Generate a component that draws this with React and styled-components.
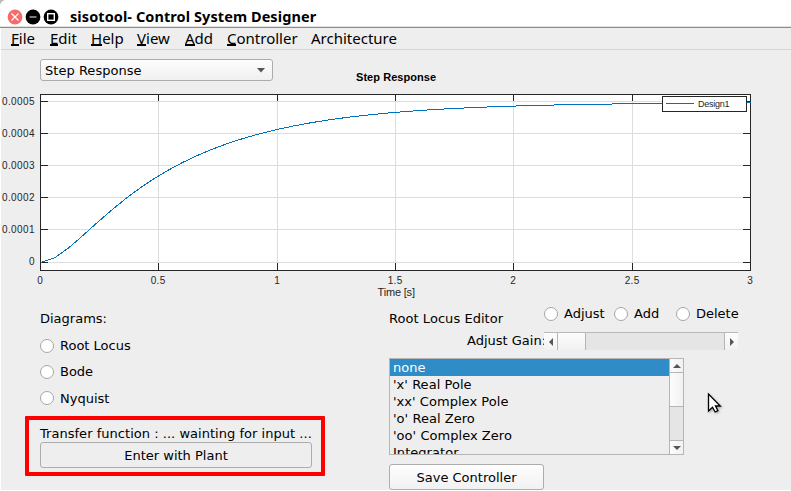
import React from "react";
import styled, { createGlobalStyle } from "styled-components";

const GlobalStyle = createGlobalStyle`
  * { box-sizing: border-box; }
  body { margin: 0; background: #fff; }
`;

const Window = styled.div`
  position: relative;
  width: 791px;
  height: 491px;
  overflow: hidden;
  display: flex;
  flex-direction: column;
  background: #fff;
  color: #000;
  font: 13px/17px "DejaVu Sans", sans-serif;
  white-space: nowrap;
`;

const CornerShade = styled.svg`
  position: absolute;
  left: 0;
  top: 0;
`;

const TitleBar = styled.header`
  height: 28px;
  flex: none;
  display: flex;
  align-items: center;
  padding: 6px 0 0 7px;
  border-bottom: 1px solid #8b8b8b;
  box-shadow: inset 0 -1px #e2e2e2;
`;

const Title = styled.h1`
  margin: -2px 0 0 11px;
  font: 700 14.5px/20px "Noto Sans", sans-serif;
  letter-spacing: 0.08px;
`;

const MenuBar = styled.nav`
  height: 22px;
  flex: none;
  display: flex;
  margin-left: 1px;
  padding-left: 10px;
  background: #eee;
  border-bottom: 1px solid #d4d4d4;
`;

const MenuItem = styled.div`
  width: ${(p) => p.$width}px;
  font: 15px/21px "Noto Sans", sans-serif;
`;

const Mnemonic = styled.span`
  display: inline-block;
  height: 18px;
  line-height: 21px;
  vertical-align: top;
  border-bottom: 2px solid #000;
`;

const Content = styled.main`
  height: 440px;
  flex: none;
  margin-left: 1px;
  padding-left: 39px;
  background: #eee;
`;

const PlotHeader = styled.div`
  height: 44px;
  display: flex;
  align-items: flex-start;
  padding-top: 9px;
`;

const Select = styled.div`
  width: 233px;
  height: 22px;
  display: flex;
  align-items: center;
  justify-content: space-between;
  padding: 1px 7px 0 4px;
  border: 1px solid #acacac;
  border-radius: 3px;
  background: linear-gradient(#fdfdfd, #f0f0f0);
  letter-spacing: 0.03px;
`;

const PlotTitle = styled.h2`
  margin: 10px 0 0 83px;
  font: 700 11px/16px "Liberation Sans", sans-serif;
  letter-spacing: 0.05px;
`;

const Plot = styled.svg`
  display: block;
  margin-left: -40px;
  overflow: visible;
  font: 10px "Liberation Sans", sans-serif;
  fill: #262626;
`;

const Panels = styled.div`
  display: grid;
  grid-template-columns: 349px 360px;
`;

const LeftPanel = styled.section`
  padding-top: 10px;
`;

const RadioRow = styled.label`
  height: ${(p) => p.$height || 17}px;
  width: ${(p) => (p.$width ? `${p.$width}px` : "auto")};
  flex: none;
  display: flex;
  align-items: center;
  gap: 6px;
`;

const RadioDot = styled.span`
  width: 14px;
  height: 14px;
  flex: none;
  border: 1px solid #a6a6a6;
  border-radius: 50%;
  background: #fff;
`;

const RadioStack = styled.div`
  padding-top: 5px;
`;

const Highlight = styled.div`
  width: 300px;
  height: 60px;
  margin: 4px 0 0 -15px;
  padding: 5px 0 0 11px;
  border: 4px solid #f00;
  border-radius: 1px;
`;

const Status = styled.div`
  letter-spacing: 0.03px;
`;

const Button = styled.button`
  display: block;
  width: ${(p) => p.$width}px;
  height: 26px;
  padding: 0;
  margin: 0;
  border: 1px solid #adadad;
  border-radius: 3px;
  background: ${(p) => (p.$flat ? "#eee" : "linear-gradient(#fdfdfd, #f1f1f1)")};
  color: #000;
  font: inherit;
`;

const RightPanel = styled.section`
  padding-top: 5px;
`;

const EditorRow = styled.div`
  display: flex;
  height: 27px;
`;

const EditorTitle = styled.div`
  width: 155px;
  flex: none;
  padding-top: 5px;
  letter-spacing: 0.05px;
`;

const GainRow = styled.div`
  display: flex;
  height: 26px;
`;

const GainLabel = styled.div`
  width: 77px;
  margin-left: 78px;
`;

const Slider = styled.div`
  width: 194px;
  height: 18px;
  display: flex;
  background: #e5e5e5;
  border-top: 1px solid #b9b9b9;
`;

const SliderArrow = styled.div`
  width: 14px;
  display: grid;
  place-items: center;
  background: linear-gradient(#fdfdfd, #f1f1f1);
  border-right: 1px solid #b5b5b5;
`;

const SliderEndArrow = styled(SliderArrow)`
  margin-left: auto;
  border-right: 0;
  border-left: 1px solid #b5b5b5;
`;

const SliderThumb = styled.div`
  width: 28px;
  background: linear-gradient(#fdfdfd, #f1f1f1);
  border-right: 1px solid #b5b5b5;
`;

const ListBox = styled.div`
  width: 295px;
  height: 97px;
  display: flex;
  border: 1px solid #b5b5b5;
  margin-bottom: 9px;
`;

const Options = styled.ul`
  flex: 1;
  margin: 0;
  padding: 0;
  list-style: none;
  overflow: hidden;
  letter-spacing: 0.04px;
`;

const Option = styled.li`
  height: 17px;
  padding-left: 3px;
  background: ${(p) => (p.$selected ? "#308cc6" : "transparent")};
  color: ${(p) => (p.$selected ? "#fff" : "#000")};
`;

const ScrollBar = styled.div`
  width: 14px;
  display: flex;
  flex-direction: column;
  border-left: 1px solid #b5b5b5;
  background: #e5e5e5;
`;

const ScrollArrow = styled.div`
  height: 14px;
  display: grid;
  place-items: center;
  background: linear-gradient(90deg, #fdfdfd, #f1f1f1);
  border-${(p) => p.$edge}: 1px solid #b5b5b5;
`;

const ScrollThumb = styled.div`
  height: 34px;
  margin-bottom: auto;
  background: linear-gradient(90deg, #fdfdfd, #f1f1f1);
  border-bottom: 1px solid #b5b5b5;
`;

const Cursor = styled.svg`
  position: absolute;
  left: 706px;
  top: 392px;
  filter: drop-shadow(1px 1px 1px rgba(0, 0, 0, 0.3));
`;

const MENUS = [
  ["File", 39], ["Edit", 41], ["Help", 46], ["View", 48],
  ["Add", 42], ["Controller", 84], ["Architecture", 90],
];

const OPTIONS = [
  "none", "'x' Real Pole", "'xx' Complex Pole", "'o' Real Zero",
  "'oo' Complex Zero", "Integrator",
];

const X_TICKS = [
  [0, 40], [0.5, 158], [1, 277], [1.5, 395], [2, 513], [2.5, 632], [3, 750],
];
const Y_TICKS = [
  ["0.0005", 101], ["0.0004", 133], ["0.0003", 165],
  ["0.0002", 197], ["0.0001", 229], ["0", 262],
];

/* Unit step response of a plant with poles at -2 and -10. */
const curve = Array.from({ length: 51 }, (_, i) => {
  const t = i * 0.06;
  const y = 1 - 1.25 * Math.exp(-2 * t) + 0.25 * Math.exp(-10 * t);
  return `${(40.5 + t * 236.67).toFixed(2)},${(262.4 - y * 160).toFixed(2)}`;
}).join(" ");

function StepPlot() {
  return (
    <Plot width="791" height="206" viewBox="0 94 791 206">
      <rect x="40" y="94" width="711" height="177" fill="#fff" />
      <g shapeRendering="crispEdges" fill="none">
        <g stroke="#dedede">
          {X_TICKS.map(([t, x]) => <path key={t} d={`M${x + 0.5} 94V270`} />)}
          {Y_TICKS.map(([l, y]) => <path key={l} d={`M40 ${y + 0.5}H750`} />)}
        </g>
        <g stroke="#262626">
          {X_TICKS.map(([t, x]) => <path key={t} d={`M${x + 0.5} 94v7M${x + 0.5} 263v7`} />)}
          {Y_TICKS.map(([l, y]) => <path key={l} d={`M40 ${y + 0.5}h8M743 ${y + 0.5}h8`} />)}
          <rect x="40.5" y="94.5" width="710" height="176" />
        </g>
        <polyline points={curve} stroke="#0072bd" />
        <rect x="662.5" y="96.5" width="84" height="15" fill="#fff" stroke="#262626" />
        <path d="M666 103.5h28" stroke="#0072bd" />
      </g>
      <text x="698" y="107" fontSize="9" textLength="31.5">Design1</text>
      {Y_TICKS.map(([l, y]) => (
        <text
          key={l}
          x="34.5"
          y={y + (l === "0" ? 3 : 4)}
          textAnchor="end"
          textLength={l === "0" ? 5.5 : 32.5}
        >
          {l}
        </text>
      ))}
      {X_TICKS.map(([t, x]) => (
        <text key={t} x={x} y="284" textAnchor="middle" textLength={t % 1 ? 14.5 : 5.5}>{t}</text>
      ))}
      <text x="377.5" y="296" fontSize="11" textLength="37.5">Time [s]</text>
    </Plot>
  );
}

function Radio({ label, width, height }) {
  return (
    <RadioRow $width={width} $height={height}>
      <RadioDot />
      {label}
    </RadioRow>
  );
}

function Arrow({ d, width, height }) {
  return (
    <svg width={width} height={height} viewBox={`0 0 ${width} ${height}`}>
      <path d={d} fill="#555" />
    </svg>
  );
}

export default function App() {
  return (
    <>
      <GlobalStyle />
      <Window>
        <CornerShade width="6" height="6"><path d="M0 0h5Q1 1 0 5z" fill="#bbb" /></CornerShade>
        <TitleBar>
          <svg width="52" height="16" viewBox="0 0 52 16">
            <circle cx="8" cy="8" r="7.4" fill="#f96b6b" />
            <path d="M4.5 4.5l7 7M11.5 4.5l-7 7" stroke="#fff" strokeWidth="1.2" />
            <circle cx="26" cy="8" r="7.4" />
            <path d="M22.5 8h7" stroke="#999" strokeWidth="1.6" />
            <circle cx="44" cy="8" r="7.4" />
            <rect x="40.7" y="4.7" width="6.6" height="6.6" fill="none" stroke="#fff" strokeWidth="1.4" />
          </svg>
          <Title>sisotool- Control System Designer</Title>
        </TitleBar>
        <MenuBar>
          {MENUS.map(([name, width]) => (
            <MenuItem key={name} $width={width}>
              {name === "Architecture" ? name : <><Mnemonic>{name[0]}</Mnemonic>{name.slice(1)}</>}
            </MenuItem>
          ))}
        </MenuBar>
        <Content>
          <PlotHeader>
            <Select>
              Step Response
              <Arrow width={8} height={5} d="M0 0h8L4 4.5z" />
            </Select>
            <PlotTitle>Step Response</PlotTitle>
          </PlotHeader>
          <StepPlot />
          <Panels>
            <LeftPanel>
              <div>Diagrams:</div>
              <RadioStack>
                <Radio label="Root Locus" height={27} />
                <Radio label="Bode" height={25} />
                <Radio label="Nyquist" height={28} />
              </RadioStack>
              <Highlight>
                <Status>Transfer function : ... wainting for input ...</Status>
                <Button $width={272} $flat>Enter with Plant</Button>
              </Highlight>
            </LeftPanel>
            <RightPanel>
              <EditorRow>
                <EditorTitle>Root Locus Editor</EditorTitle>
                <Radio label="Adjust" width={70} />
                <Radio label="Add" width={62} />
                <Radio label="Delete" />
              </EditorRow>
              <GainRow>
                <GainLabel>Adjust Gain:</GainLabel>
                <Slider>
                  <SliderArrow><Arrow width={4} height={8} d="M4 0v8L0 4z" /></SliderArrow>
                  <SliderThumb />
                  <SliderEndArrow><Arrow width={4} height={8} d="M0 0v8L4 4z" /></SliderEndArrow>
                </Slider>
              </GainRow>
              <ListBox>
                <Options>
                  {OPTIONS.map((o) => <Option key={o} $selected={o === "none"}>{o}</Option>)}
                </Options>
                <ScrollBar>
                  <ScrollArrow $edge="bottom"><Arrow width={8} height={4} d="M0 4h8L4 0z" /></ScrollArrow>
                  <ScrollThumb />
                  <ScrollArrow $edge="top"><Arrow width={8} height={4} d="M0 0h8L4 4z" /></ScrollArrow>
                </ScrollBar>
              </ListBox>
              <Button $width={155}>Save Controller</Button>
            </RightPanel>
          </Panels>
        </Content>
        <Cursor width="16" height="24" viewBox="0 0 16 24">
          <path d="M2.5 2v17l4-3.7 2.6 4.7 2.8-1.4-2.4-4.6h4.8z" fill="#fff" stroke="#000" strokeWidth="1.3" />
        </Cursor>
      </Window>
    </>
  );
}
